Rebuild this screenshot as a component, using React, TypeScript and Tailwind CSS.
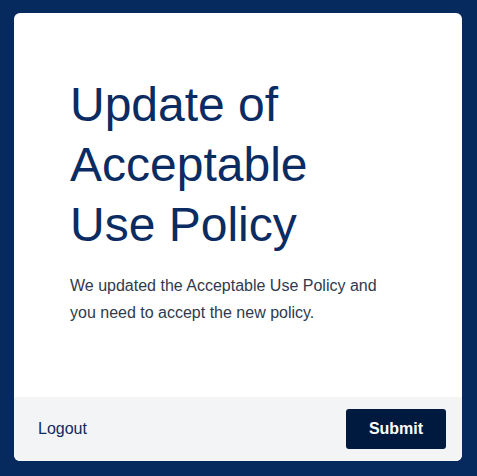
import React from "react";

export default function App() {
  return (
    <div
      className="min-h-screen w-full bg-[#062a5e] pl-[14px] pt-[13px]"
      style={{ fontFamily: '"Liberation Sans", Arial, sans-serif' }}
    >
      <div className="w-[448px] h-[448px] bg-white rounded-md flex flex-col overflow-hidden">
        <div className="flex-1 pl-14 pr-14 pt-[62px]">
          <h1 className="text-[48px] leading-[60px] text-[#0b2b63] font-normal mb-[17px]">
            Update of
            <br />
            Acceptable
            <br />
            Use Policy
          </h1>
          <p className="text-[16px] leading-[27px] text-[#2f3a4c] max-w-[320px]">
            We updated the Acceptable Use Policy and you need to accept the new policy.
          </p>
        </div>
        <div className="h-16 bg-[#f3f4f6] flex items-center justify-between pl-6 pr-4">
          <button className="text-[16px] text-[#0b2b63]">Logout</button>
          <button className="w-[100px] h-10 rounded-[3px] bg-[#001a3f] text-white font-bold text-[16px]">
            Submit
          </button>
        </div>
      </div>
    </div>
  );
}
